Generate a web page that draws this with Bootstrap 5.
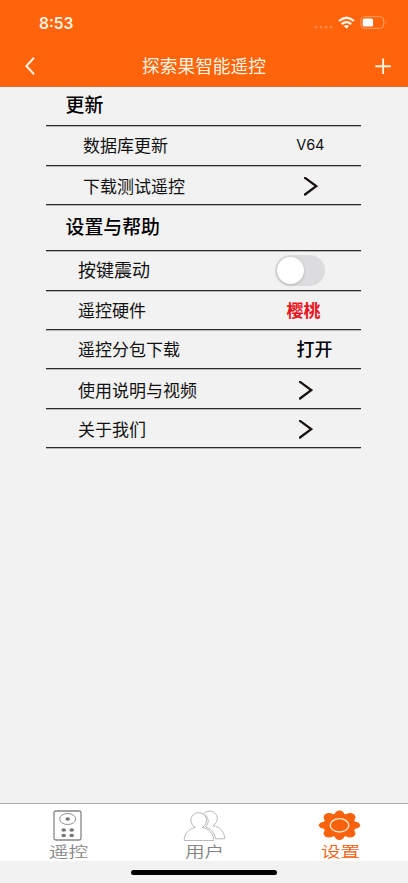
<!DOCTYPE html>
<html lang="zh-CN">
<head>
<meta charset="utf-8">
<meta name="viewport" content="width=device-width, initial-scale=1">
<title>探索果智能遥控</title>
<link href="https://cdn.jsdelivr.net/npm/bootstrap@5.3.0/dist/css/bootstrap.min.css" rel="stylesheet">
<style>
  body { font-family: Inter, "Noto Sans CJK SC", sans-serif; background: #f2f2f2; color: #111; }
  svg { display: block; flex: none; }
  .screen { height: 883px; overflow: hidden; }
  .top-area { height: 87px; background: #ff630b; color: #fff3e0; border-bottom: 1px solid #e9692b; }
  .status { height: 45px; padding: 0 21px 0 39px; }
  .clock { font-size: 15.5px; font-weight: 600; line-height: 45px; padding-top: 1px; }
  .title-bar { height: 41px; padding: 0 16px 0 24px; }
  .title { font-size: 17.7px; line-height: 41px; padding: 1px 2px 0 0; }
  .settings { width: 314.5px; margin-left: 46px; }
  .line-row { height: 39.4px; border-bottom: 1px solid #2b2b2b; box-shadow: 0 1px #b8b8b8; font-size: 17px; line-height: 1; white-space: nowrap; }
  .group-head { font-size: 18.9px; font-weight: 500; padding-left: 19.5px; color: #000; padding-top: 1px; }
  .group-head.second { height: 46px; padding-top: 1px; }
  .in-a { padding-left: 37px; }
  .in-b { padding-left: 32px; }
  .drop-1 { padding-top: 2px; }
  .drop-2 { padding-top: 3px; }
  .drop-3 { padding-top: 5px; }
  .wide { font-size: 18px; padding-top: 1px; }
  .version { font-size: 14.5px; margin-right: 36px; padding-bottom: 2px; }
  .hardware { color: #e8141c; font-weight: 700; margin-right: 40px; }
  .open { font-size: 18px; font-weight: 500; color: #000; margin-right: 28px; padding-bottom: 1px; }
  .go-a { margin-right: 43px; }
  .go-b { margin-right: 48px; }
  .toggle { width: 50px; height: 31px; border-radius: 16px; background: #dcdcde; padding: 2px; margin-right: 36px; }
  .knob { width: 27px; height: 27px; border-radius: 50%; background: #fff; box-shadow: 0 1px 3px #0003; }
  .tabs { height: 58px; background: #fff; border-top: 1px solid #aaa; color: #858585; }
  .tab-item { flex: 1 1 0; padding-top: 5px; }
  .tab-text { font-size: 14.6px; line-height: 16px; transform: scaleX(1.35); font-weight: 350; margin: .6px 0 0 1px; }
  .tab-item.current { color: #f4600f; }
  .home { height: 22px; }
  .home-bar { width: 146px; height: 5px; border-radius: 3px; background: #000; }
</style>
<script src="https://cdn.jsdelivr.net/npm/bootstrap@5.3.0/dist/js/bootstrap.bundle.min.js"></script>
</head>
<body>
<div class="screen d-flex flex-column">
  <header class="top-area flex-shrink-0">
    <div class="status d-flex justify-content-between align-items-center">
      <span class="clock">8:53</span>
      <svg width="74" height="18" viewBox="0 0 74 18">
        <g fill="#ff8540"><circle cx="3" cy="13" r="1.6"/><circle cx="8" cy="13" r="1.6"/><circle cx="13" cy="13" r="1.6"/><circle cx="18" cy="13" r="1.6"/></g>
        <g fill="none" stroke="#fff7e8" stroke-width="2.3"><path d="M26 7Q33.5 .5 41 7"/><path d="M28.7 10.2Q33.5 6 38.3 10.2"/></g>
        <path d="M30.9 12.1Q33.5 9.9 36.1 12.1L33.5 14.8Z" fill="#fff7e8"/>
        <rect x="47.9" y="2.7" width="22.8" height="11.6" rx="3.3" fill="none" stroke="#ffa060"/>
        <rect x="49.7" y="4.5" width="10.4" height="8" rx="1.6" fill="#fff"/>
        <path d="M72 6.6q1.5 1.9 0 3.8z" fill="#ffa060"/>
      </svg>
    </div>
    <div class="title-bar d-flex justify-content-between align-items-center">
      <svg width="12" height="18" viewBox="0 0 12 18" fill="none" stroke="#fff3e0" stroke-width="2"><path d="M10 .8 2.4 9l7.6 8.2"/></svg>
      <span class="title">探索果智能遥控</span>
      <svg width="18" height="18" viewBox="0 0 18 18" stroke="#fff3e0" stroke-width="1.9"><path d="M1.3 9.2h15.5M9.1 1.5v15.4"/></svg>
    </div>
  </header>

  <main class="settings flex-grow-1">
    <div class="line-row group-head d-flex align-items-center">更新</div>
    <div class="line-row in-a drop-1 d-flex justify-content-between align-items-center"><span>数据库更新</span><span class="version">V64</span></div>
    <div class="line-row in-a d-flex justify-content-between align-items-center drop-3"><span>下载测试遥控</span><svg class="go-a" width="14" height="20" viewBox="0 0 14 20" fill="none" stroke="#17120f" stroke-width="2.3" stroke-linecap="round"><path d="M1 .9 12.2 9.2 1 17.5"/></svg></div>
    <div class="line-row group-head second d-flex align-items-center">设置与帮助</div>
    <div class="line-row in-b d-flex justify-content-between align-items-center"><span class="wide">按键震动</span><div class="toggle" role="switch" aria-checked="false"><div class="knob"></div></div></div>
    <div class="line-row in-b drop-2 d-flex justify-content-between align-items-center"><span>遥控硬件</span><span class="hardware">樱桃</span></div>
    <div class="line-row in-b drop-2 d-flex justify-content-between align-items-center"><span>遥控分包下载</span><span class="open">打开</span></div>
    <div class="line-row in-b drop-3 d-flex justify-content-between align-items-center"><span>使用说明与视频</span><svg class="go-b" width="14" height="20" viewBox="0 0 14 20" fill="none" stroke="#17120f" stroke-width="2.3" stroke-linecap="round"><path d="M1 .9 12.2 9.2 1 17.5"/></svg></div>
    <div class="line-row in-b drop-3 d-flex justify-content-between align-items-center"><span>关于我们</span><svg class="go-b" width="14" height="20" viewBox="0 0 14 20" fill="none" stroke="#17120f" stroke-width="2.3" stroke-linecap="round"><path d="M1 .9 12.2 9.2 1 17.5"/></svg></div>
  </main>

  <nav class="tabs d-flex flex-shrink-0">
    <div class="tab-item d-flex flex-column align-items-center">
      <svg width="44" height="34" viewBox="0 0 44 34" fill="none" stroke="#858585">
        <rect x="8" y="2" width="27" height="29" rx="1.8" stroke-width="1.3"/>
        <ellipse cx="21.7" cy="10" rx="8" ry="5.5" stroke-width=".9"/>
        <g fill="#777" stroke="none"><ellipse cx="21.7" cy="10" rx="2.3" ry="1.7"/><ellipse cx="17.7" cy="21" rx="2.3" ry="1.7"/><ellipse cx="25.7" cy="21" rx="2.3" ry="1.7"/><ellipse cx="17.7" cy="26.5" rx="2.3" ry="1.7"/><ellipse cx="25.7" cy="26.5" rx="2.3" ry="1.7"/></g>
      </svg>
      <span class="tab-text">遥控</span>
    </div>
    <div class="tab-item d-flex flex-column align-items-center">
      <svg width="44" height="34" viewBox="0 0 44 34" fill="none" stroke="#b8b8b8" stroke-width="1">
        <path d="M13.2 18.3C10.2 16.5 8.9 13.8 8.9 11.2 8.9 7 12.3 3.7 16.6 3.7s7.9 3.3 7.9 7.5c0 2.6-1.3 5.3-4 7.1 7 2.1 11.3 6.7 11.3 13.2H2.2c0-6.5 4-11.1 11-13.2z"/>
        <path d="M21.6 4.7C23 3 25.2 2.1 27.4 2.1c4.4 0 7.9 3.4 7.9 7.5 0 3-1.6 5.4-4.3 7 7.3 1.4 11.7 6.6 11.7 13.2h-8.8M22.7 5.6c4.6 3.3 4.4 8.6.8 12.3 5 1.6 8.4 4.7 10.3 12"/>
      </svg>
      <span class="tab-text">用户</span>
    </div>
    <div class="tab-item current d-flex flex-column align-items-center">
      <svg width="44" height="34" viewBox="0 0 44 34">
        <!-- Eight round teeth around a wide hub -->
        <g fill="#f9620c">
          <ellipse cx="21.5" cy="16.3" rx="16.2" ry="11.8"/>
          <ellipse cx="21.5" cy="6" rx="4.9" ry="4.5"/><ellipse cx="21.5" cy="26.6" rx="4.9" ry="4.5"/>
          <ellipse cx="6.6" cy="16.3" rx="5.8" ry="3.5"/><ellipse cx="36.4" cy="16.3" rx="5.8" ry="3.5"/>
          <ellipse cx="11" cy="8.4" rx="5.4" ry="4.3"/><ellipse cx="32" cy="8.4" rx="5.4" ry="4.3"/>
          <ellipse cx="11" cy="24.2" rx="5.4" ry="4.3"/><ellipse cx="32" cy="24.2" rx="5.4" ry="4.3"/>
        </g>
        <ellipse cx="21.5" cy="16.3" rx="9.3" ry="6.7" fill="none" stroke="#ffe5c9" stroke-width="1.4"/>
      </svg>
      <span class="tab-text">设置</span>
    </div>
  </nav>
  <div class="home d-flex justify-content-center align-items-center flex-shrink-0"><div class="home-bar"></div></div>
</div>
</body>
</html>
